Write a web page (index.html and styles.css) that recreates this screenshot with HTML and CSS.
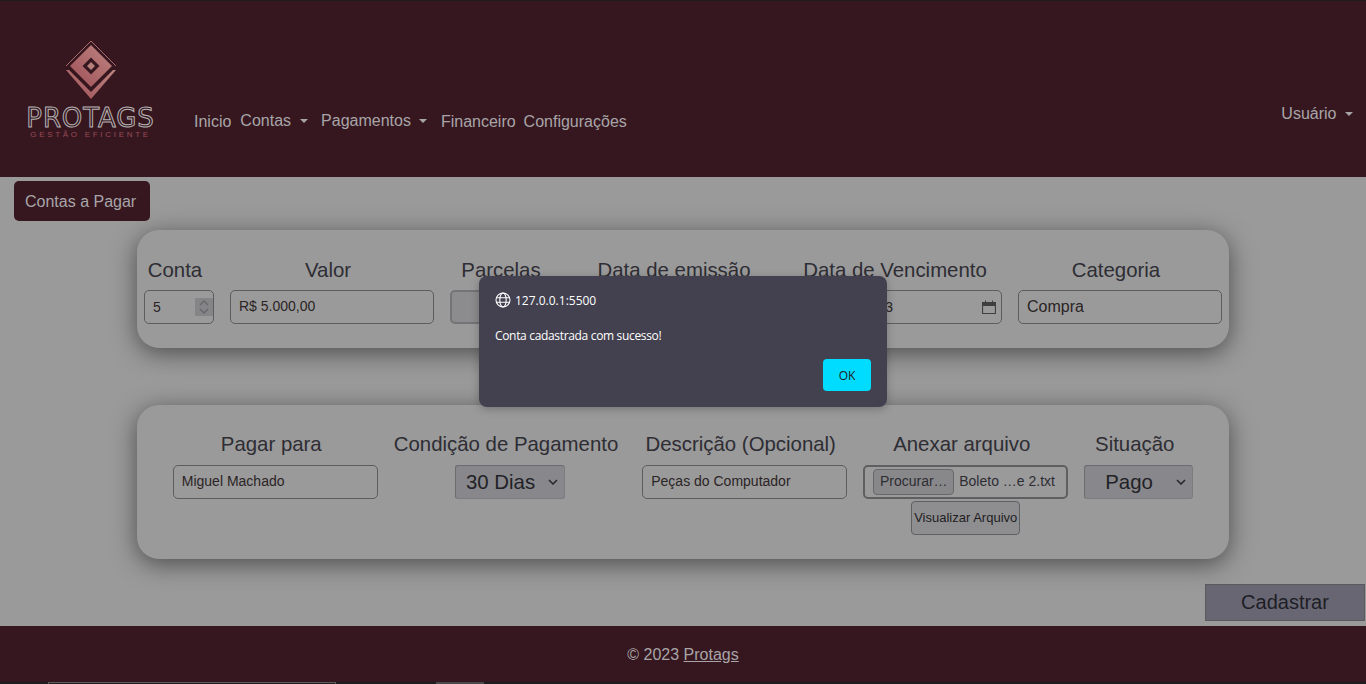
FILE: index.html
```html
<!DOCTYPE html>
<html>
  <head>
    <title>Contas a Pagar</title>
    <link rel="stylesheet" href="styles.css">
  </head>
  <body>
    <nav class="navbar">
      <a class="brand" href="#">
        <svg class="brand-mark" width="54" height="60" viewBox="0 0 54 60">
          <defs>
            <linearGradient id="rose" x1="1" y1="0" x2="0" y2="1">
              <stop offset="0" stop-color="#bd8580"/>
              <stop offset="1" stop-color="#9f4f57"/>
            </linearGradient>
          </defs>
          <polygon points="2,30 27,59 52,30" fill="url(#rose)"/>
          <polygon points="1,26 27,0 53,26 27,52" fill="#36171f"/>
          <path d="M2 26L27 1L52 26" fill="none" stroke="#a86a6a" stroke-width="1"/>
          <polygon points="6,26 27,5 48,26 27,47" fill="url(#rose)"/>
          <polygon points="18.500,26 27,17.500 35.500,26 27,34.500" fill="#36171f"/>
          <polygon points="23,26 27,22 31,26 27,30" fill="#b57f7a"/>
        </svg>
        <span class="brand-name">PROTAGS</span>
        <span class="brand-tag">GESTÃO EFICIENTE</span>
      </a>
      <ul class="nav-links">
        <li class="nav-offset nav-first"><a href="#">Inicio</a></li>
        <li class="nav-drop"><a class="caret" href="#">Contas</a></li>
        <li class="nav-drop"><a class="caret" href="#">Pagamentos</a></li>
        <li class="nav-offset"><a href="#">Financeiro</a></li>
        <li class="nav-offset"><a href="#">Configurações</a></li>
      </ul>
      <a class="caret nav-user" href="#">Usuário</a>
    </nav>

    <main class="content">
      <div class="page-tag">Contas a Pagar</div>

      <section class="card card-first">
        <div class="field">
          <label>Conta</label>
          <div class="control number-control">
            <span>5</span>
            <span class="spinner">
              <svg width="14" height="18" viewBox="0 0 14 18">
                <path d="M3 7l4-4 4 4M3 11l4 4 4-4" fill="none" stroke="#66666a" stroke-width="1.3"/>
              </svg>
            </span>
          </div>
        </div>
        <div class="field">
          <label>Valor</label>
          <input class="control wide" type="text" value="R$ 5.000,00">
        </div>
        <div class="field">
          <label>Parcelas</label>
          <div class="control parcelas"></div>
        </div>
        <div class="field">
          <label class="label-full">Data de emissão</label>
          <div class="control date-mid"></div>
        </div>
        <div class="field">
          <label class="label-full">Data de Vencimento</label>
          <div class="control date-control">
            <span class="date-value">25/08/2023</span>
            <svg width="14" height="14" viewBox="0 0 14 14">
              <path d="M.5 2.500h13v11H.5zM.5 5.500h13" fill="none" stroke="#3f3f42" stroke-width="1.2"/>
              <path d="M1 2.500h12v3H1zM3.500 .5v2M10.500 .5v2" fill="#3f3f42" stroke="#3f3f42"/>
            </svg>
          </div>
        </div>
        <div class="field">
          <label>Categoria</label>
          <input class="control wide big-text" type="text" value="Compra">
        </div>
      </section>

      <section class="card card-second">
        <div class="field">
          <label>Pagar para</label>
          <input class="control wide" type="text" value="Miguel Machado">
        </div>
        <div class="field">
          <label>Condição de Pagamento</label>
          <div class="select-box condicao">
            <span>30 Dias</span>
            <svg width="10" height="6" viewBox="0 0 10 6"><path d="M1 1l4 4 4-4" fill="none" stroke="#26262a" stroke-width="1.500"/></svg>
          </div>
        </div>
        <div class="field">
          <label>Descrição (Opcional)</label>
          <input class="control wide" type="text" value="Peças do Computador">
        </div>
        <div class="field">
          <label>Anexar arquivo</label>
          <div class="file-box">
            <span class="file-button">Procurar…</span>
            <span class="file-name">Boleto …e 2.txt</span>
          </div>
          <button class="view-file" type="button">Visualizar Arquivo</button>
        </div>
        <div class="field">
          <label>Situação</label>
          <div class="select-box situacao">
            <span>Pago</span>
            <svg width="10" height="6" viewBox="0 0 10 6"><path d="M1 1l4 4 4-4" fill="none" stroke="#26262a" stroke-width="1.500"/></svg>
          </div>
        </div>
      </section>

      <div class="actions">
        <button class="submit" type="button">Cadastrar</button>
      </div>
    </main>

    <footer class="footer">© 2023 <a href="#">Protags</a></footer>
    <div class="strip">
      <span class="strip-input"></span>
      <span class="strip-button"></span>
    </div>

    <div class="dialog">
      <div class="dialog-origin">
        <svg width="16" height="16" viewBox="0 0 16 16">
          <g fill="none" stroke="#fff" stroke-width="1.100">
            <circle cx="8" cy="8" r="7"/>
            <ellipse cx="8" cy="8" rx="3.200" ry="7"/>
            <path d="M1.200 5.800h13.600M1.200 10.200h13.600"/>
          </g>
        </svg>
        <span>127.0.0.1:5500</span>
      </div>
      <p class="dialog-msg">Conta cadastrada com sucesso!</p>
      <div class="dialog-actions">
        <button class="dialog-ok" type="button">OK</button>
      </div>
    </div>
  </body>
</html>
```

FILE: styles.css
```css
* {
  box-sizing: border-box;
}
html,
body {
  height: 684px;
  overflow: hidden;
}
body {
  margin: 0;
  background-color: #9a9a9b;
  color: #2e2d33;
  font-family: "Liberation Sans", Arial, sans-serif;
  font-size: 16px;
}
a {
  color: inherit;
  text-decoration: none;
}

.navbar {
  display: flex;
  align-items: center;
  height: 177px;
  padding-left: 27px;
  padding-right: 13px;
  background-color: #36171f;
  border-top: 1px solid #1d1d20;
  color: #a8a5a8;
}
.brand {
  display: flex;
  flex-direction: column;
  align-items: center;
  width: 127px;
  margin-top: 1px;
}
.brand-mark {
  display: block;
  margin-bottom: 7px;
}
.brand-name {
  font-family: "DejaVu Sans", sans-serif;
  font-size: 26px;
  line-height: 22px;
  letter-spacing: 0.900px;
  color: #36171f;
  -webkit-text-stroke: 1px #b5b3b3;
}
.brand-tag {
  margin-top: 2px;
  font-size: 8px;
  line-height: 8px;
  letter-spacing: 2.700px;
  white-space: nowrap;
  color: #9a4a57;
}
.nav-links {
  display: flex;
  align-items: center;
  gap: 8px;
  margin: 64px 0 0 40px;
  padding: 0;
  list-style: none;
}
.nav-offset {
  margin-top: 2px;
}
.nav-first {
  margin-right: 1px;
}
.nav-drop {
  padding-right: 5.500px;
}
.caret::after {
  content: "";
  display: inline-block;
  margin-left: 8.500px;
  vertical-align: 3px;
  border-top: 4.800px solid;
  border-left: 4.800px solid transparent;
  border-right: 4.800px solid transparent;
}
.nav-user {
  margin-left: auto;
  margin-top: 50px;
}

.content {
  height: 449px;
}
.page-tag {
  display: inline-block;
  margin: 4px 0 0 14px;
  padding: 1px 14px 0 11px;
  height: 40px;
  line-height: 39px;
  background-color: #36171f;
  border-radius: 5px;
  color: #a8a5a8;
}
.card {
  display: flex;
  justify-content: center;
  gap: 16px;
  width: 1092px;
  height: 118px;
  margin: 9px 0 0 137px;
  padding-top: 24px;
  background-color: #9a9a9b;
  border-radius: 22px;
  box-shadow: 0 5px 25px rgba(0, 0, 0, 0.5);
}
.card-second {
  height: 154px;
  margin-top: 57px;
}
.field {
  display: flex;
  flex-direction: column;
  align-items: center;
}
.field label {
  height: 30px;
  margin-bottom: 6px;
  padding-right: 8px;
  font-size: 20.400px;
  line-height: 30px;
  white-space: nowrap;
}
.field .label-full {
  padding-right: 0;
}
.card-first {
  padding-top: 25px;
}
.card-first .field label {
  margin-bottom: 5px;
}
.card-first .wide {
  width: 204px;
}
.control {
  display: flex;
  align-items: center;
  height: 34px;
  padding: 0 8px 2px;
  background: transparent;
  border: 1px solid #5d5d60;
  border-radius: 5px;
  font-family: inherit;
  font-size: 14px;
  color: #2b2424;
}
.wide {
  width: 205px;
}
.big-text {
  padding-bottom: 0;
  font-size: 16px;
}
.number-control {
  justify-content: space-between;
  width: 70px;
  padding-right: 0;
  padding-bottom: 0;
}
.spinner {
  display: flex;
  align-items: center;
  justify-content: center;
  width: 18px;
  height: 18px;
  background-color: #858587;
}
.parcelas {
  width: 110px;
  background-color: #8c8c8f;
  border-color: #747477;
  border-width: 2px;
}
.date-mid {
  width: 196px;
}
.date-control {
  justify-content: space-between;
  width: 214px;
  padding-right: 5px;
  padding-bottom: 0;
}
.date-value {
  margin-left: 26px;
}
.select-box {
  display: flex;
  align-items: center;
  justify-content: space-between;
  height: 34px;
  background-color: #88888c;
  border: 1px solid #7c7c80;
  border-top-color: #6c6c70;
  border-left-color: #6c6c70;
  border-radius: 3px;
  font-size: 20.400px;
  color: #222226;
}
.condicao {
  width: 110px;
  padding: 0 6px 0 10px;
}
.situacao {
  width: 109px;
  padding: 0 6px 0 20px;
}
.file-box {
  display: flex;
  align-items: center;
  gap: 5px;
  width: 205px;
  height: 34px;
  padding-left: 8px;
  border: 2px solid #5f5f62;
  border-radius: 5px;
  font-size: 14px;
  color: #2e2d33;
  white-space: nowrap;
}
.file-button {
  display: flex;
  align-items: center;
  justify-content: center;
  width: 81px;
  height: 26px;
  padding-bottom: 2px;
  background-color: #88888b;
  border: 1px solid #68686b;
  border-radius: 4px;
}
.file-name {
  margin-bottom: 2px;
}
.view-file {
  width: 109px;
  height: 34px;
  margin-top: 2px;
  padding: 0 0 2px;
  background-color: #8e8e90;
  border: 1px solid #606063;
  border-radius: 4px;
  font-family: inherit;
  font-size: 13px;
  color: #1f1d22;
  white-space: nowrap;
}
.actions {
  display: flex;
  justify-content: flex-end;
  margin: 25px 1px 0 0;
}
.submit {
  width: 160px;
  height: 37px;
  padding: 0;
  background-color: #686672;
  border: 1px solid #5a5a5e;
  font-family: inherit;
  font-size: 20px;
  color: #1e1e26;
}

.footer {
  height: 56px;
  padding-top: 18px;
  background-color: #36171f;
  color: #a8a5a8;
  line-height: 22px;
  text-align: center;
}
.footer a {
  text-decoration: underline;
}
.strip {
  display: flex;
  height: 2px;
  padding-left: 48px;
  background-color: #1f1d20;
}
.strip-input {
  width: 288px;
  border: 1px solid #5c5c5c;
  border-bottom: none;
}
.strip-button {
  width: 48px;
  margin-left: 100px;
  background-color: #4a4a4d;
}

/* browser alert, sits over the page */
.dialog {
  position: absolute;
  top: 276px;
  left: 479px;
  width: 408px;
  height: 131px;
  padding: 16px;
  background-color: #434150;
  border-radius: 8px;
  box-shadow: 0 2px 8px rgba(0, 0, 0, 0.25);
  color: #fff;
  font-family: "Open Sans", sans-serif;
  font-size: 12px;
}
.dialog-origin {
  display: flex;
  align-items: center;
  gap: 4px;
  height: 16px;
}
.dialog-msg {
  margin: 20px 0 0;
  line-height: 16px;
  letter-spacing: -0.330px;
}
.dialog-actions {
  display: flex;
  justify-content: flex-end;
  margin-top: 15px;
}
.dialog-ok {
  width: 48px;
  height: 32px;
  padding: 0;
  background-color: #00dcff;
  border: none;
  border-radius: 4px;
  font-family: inherit;
  font-size: 12px;
  color: #202124;
}
```
